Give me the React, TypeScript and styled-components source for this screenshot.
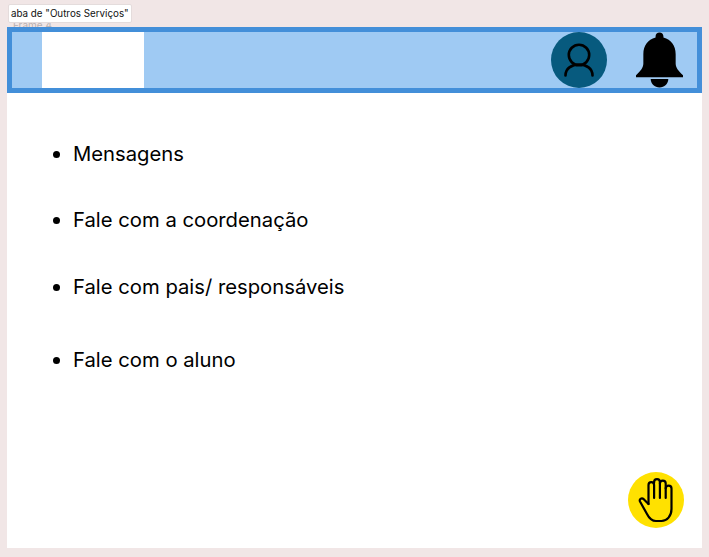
import styled, { createGlobalStyle } from "styled-components";

const GlobalStyle = createGlobalStyle`
  html, body {
    margin: 0;
    height: 100%;
    background: #f1e6e6;
    font-family: "Inter", "Liberation Sans", sans-serif;
  }
`;

const Page = styled.div`
  position: relative;
  width: 709px;
  height: 557px;
  padding: 27px 7px 9px;
  box-sizing: border-box;
  overflow: hidden;
`;

const FrameTag = styled.div`
  position: absolute;
  left: 8px;
  top: 4px;
  height: 17px;
  padding: 0 2px;
  display: flex;
  align-items: center;
  background: #ffffff;
  border: 1px solid #e4dcdc;
  border-radius: 2px;
  font-size: 9.8px;
  color: #111111;
  white-space: nowrap;
  z-index: 2;
`;

const FrameName = styled.span`
  position: absolute;
  left: 13px;
  top: 19px;
  font-size: 10px;
  line-height: 13px;
  color: #b8b0b0;
`;

const Frame = styled.main`
  position: relative;
  height: 521px;
  background: #ffffff;
`;

const Header = styled.header`
  box-sizing: border-box;
  height: 66px;
  display: flex;
  align-items: center;
  padding-left: 30px;
  background: #9fcaf3;
  border: 5px solid #438fd9;
`;

const LogoSlot = styled.div`
  width: 102px;
  height: 56px;
  background: #ffffff;
`;

const HeaderActions = styled.div`
  margin-left: auto;
  display: flex;
  align-items: center;
  gap: 29px;
  padding-right: 14px;
`;

const Avatar = styled.div`
  width: 56px;
  height: 56px;
  border-radius: 50%;
  background: #075a7e;
  display: flex;
  align-items: center;
  justify-content: center;
`;

const MenuList = styled.ul`
  margin: 0;
  padding: 49px 0 0 66px;
  list-style: disc;
  font-size: 20.25px;
  line-height: 24px;
  color: #000000;
`;

const MenuItem = styled.li<{ $gap: number }>`
  margin-bottom: ${(p) => p.$gap}px;
`;

const HandButton = styled.button`
  position: absolute;
  right: 18px;
  bottom: 20px;
  width: 56px;
  height: 56px;
  padding: 0;
  border: none;
  border-radius: 50%;
  background: #ffe100;
  display: flex;
  align-items: center;
  justify-content: center;
`;

const UserIcon = () => (
  <svg width="30" height="34" viewBox="0 0 30 34" fill="none" stroke="#000" strokeWidth="2.6" strokeLinecap="round">
    <circle cx="15" cy="12" r="10.200" />
    <path d="M1.500 32.500c0-7 6-11 13.500-11s13.500 4 13.500 11" />
  </svg>
);

const BellIcon = () => (
  <svg width="47" height="56" viewBox="0 0 48 56" fill="#000">
    <path d="M24 0c2.300 0 4 1.700 4 3.800v1.300c8 2 12.500 8.500 12.500 17v9.400c0 4.500 3 7.500 7.500 12v2H0v-2c4.500-4.500 7.500-7.500 7.500-12v-9.400c0-8.500 4.500-15 12.500-17V3.800C20 1.700 21.700 0 24 0z" />
    <path d="M15 47.500h18c0 5-4 8.500-9 8.500s-9-3.500-9-8.500z" />
  </svg>
);

const HandIcon = () => (
  <svg width="36" height="45" viewBox="0 0 36 45" fill="none" stroke="#000" strokeWidth="2.2" strokeLinecap="round" strokeLinejoin="round">
    <path d="M10.500 26V7a2.800 2.800 0 0 1 5.600 0v13" />
    <path d="M16.100 5V4a2.900 2.900 0 0 1 5.800 0v16" />
    <path d="M21.900 5.500a2.900 2.900 0 0 1 5.800 0V20" />
    <path d="M27.700 10.500a2.900 2.900 0 0 1 5.800 0V31c0 7-4.500 12-10 12H18c-5 0-7-3-9-7L2 23.500c-1-2 1.500-4 3.500-2.500l5 5" />
  </svg>
);

const items = [
  { label: "Mensagens", gap: 42 },
  { label: "Fale com a coordenação", gap: 43 },
  { label: "Fale com pais/ responsáveis", gap: 49 },
  { label: "Fale com o aluno", gap: 0 },
];

export default function App() {
  return (
    <>
      <GlobalStyle />
      <Page>
        <FrameTag>aba de "Outros Serviços"</FrameTag>
        <FrameName>Frame 4</FrameName>
        <Frame>
          <Header>
            <LogoSlot />
            <HeaderActions>
              <Avatar>
                <UserIcon />
              </Avatar>
              <BellIcon />
            </HeaderActions>
          </Header>
          <MenuList>
            {items.map((item) => (
              <MenuItem key={item.label} $gap={item.gap}>
                {item.label}
              </MenuItem>
            ))}
          </MenuList>
          <HandButton>
            <HandIcon />
          </HandButton>
        </Frame>
      </Page>
    </>
  );
}
